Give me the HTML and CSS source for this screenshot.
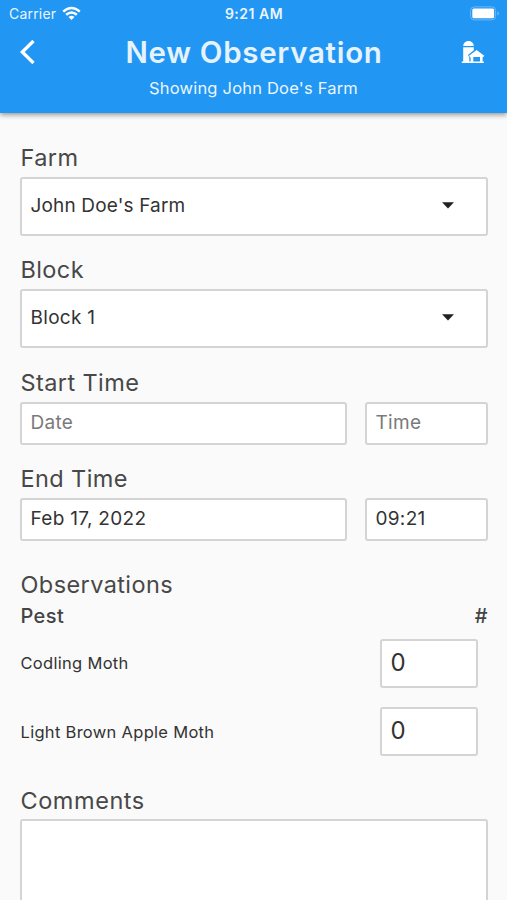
FILE: index.html
```html
<!DOCTYPE html>
<html lang="en">
<head>
<meta charset="utf-8">
<title>New Observation</title>
<link rel="stylesheet" href="styles.css">
</head>
<body>
<header class="header">
  <div class="status">
    <div class="carrier"><span>Carrier</span>
      <svg class="wifi" width="19" height="15" viewBox="0 0 19 15"><g fill="none" stroke="#fff" stroke-width="2.5"><path d="M1.2 5.6Q9.500-1.600 17.800 5.600"/><path d="M4.200 8.800Q9.500 4.200 14.800 8.800"/></g><path d="M6.500 11Q9.500 8.700 12.500 11L9.500 14.100Z" fill="#fff"/></svg>
    </div>
    <div class="clock">9:21 AM</div>
    <svg class="battery" width="31" height="15" viewBox="0 0 31 15"><rect x="1.600" y=".9" width="25" height="13" rx="3.500" fill="none" stroke="#6bb9f8" stroke-width="1"/><rect x="3.300" y="2.600" width="21.800" height="9.600" rx="1.500" fill="#fff"/><path d="M28.300 5.300Q30 6 30 7.400T28.300 9.500Z" fill="#6bb9f8"/></svg>
  </div>
  <div class="bar">
    <svg class="back" width="18" height="26" viewBox="0 0 18 26"><path d="M14.500 2L3.300 13L14.500 24" fill="none" stroke="#fff" stroke-width="3.300"/></svg>
    <h1 class="title">New Observation</h1>
    <svg class="barn" width="24" height="24" viewBox="0 0 24 24" fill="#fff"><path d="M2.200 5.900C2.700-.7 12.300-.7 12.800 5.900Z"/><path d="M2.200 7.200H12.800V10.200L7 15.100L8.300 17.300V21.300H8.800V23H.8V21.600H2.200Z"/><path fill-rule="evenodd" d="M15.600 10L23.300 15.700L22 17.300L21.600 17V21.500H22.800V23H8.600V21.500H9.600V17L9.200 17.300L8 15.700ZM12.300 17V21.500H19V17Z"/></svg>
  </div>
  <p class="subtitle">Showing John Doe's Farm</p>
</header>
<main class="form">
  <section class="field">
    <h2 class="label">Farm</h2>
    <div class="box select"><span class="value value-farm">John Doe's Farm</span><svg width="12" height="7" viewBox="0 0 12 7"><path d="M0 .3H12L6 6.500Z" fill="#222"/></svg></div>
  </section>
  <section class="field">
    <h2 class="label">Block</h2>
    <div class="box select"><span class="value">Block 1</span><svg width="12" height="7" viewBox="0 0 12 7"><path d="M0 .3H12L6 6.500Z" fill="#222"/></svg></div>
  </section>
  <section class="field">
    <h2 class="label">Start Time</h2>
    <div class="when"><div class="box hint">Date</div><div class="box hint">Time</div></div>
  </section>
  <section class="field field-end">
    <h2 class="label">End Time</h2>
    <div class="when"><div class="box">Feb 17, 2022</div><div class="box">09:21</div></div>
  </section>
  <section class="observations">
    <h2 class="label">Observations</h2>
    <div class="columns"><span>Pest</span><span>#</span></div>
    <div class="pest"><span>Codling Moth</span><div class="box count">0</div></div>
    <div class="pest"><span>Light Brown Apple Moth</span><div class="box count">0</div></div>
  </section>
  <section class="comments">
    <h2 class="label">Comments</h2>
    <div class="box note"></div>
  </section>
</main>
</body>
</html>
```
FILE: styles.css
```css
* { box-sizing: border-box; }
html { background: #fafafa; }
body {
  margin: 0;
  height: 900px;
  overflow: hidden;
  display: flex;
  flex-direction: column;
  background: #fafafa;
  color: #333;
  font-family: Inter, "Liberation Sans", sans-serif;
}
h1, h2, p { margin: 0; }
svg { display: block; flex: none; }
.header {
  flex: none;
  height: 113px;
  background: #2196f3;
  color: #eaf5fe;
  box-shadow: 0 2px 5px rgba(0, 0, 0, .4);
}
.status {
  height: 27px;
  padding: 0 7px 0 9px;
  display: grid;
  grid-template-columns: 1fr auto 1fr;
  align-items: center;
}
.carrier { display: flex; align-items: center; gap: 6px; font-size: 14px; letter-spacing: .2px; }
.wifi { margin-top: -1px; }
.clock { font-size: 14px; font-weight: 600; letter-spacing: .5px; margin-left: -1px; }
.battery { justify-self: end; margin-top: -1px; }
.bar {
  height: 49px;
  padding: 1px 22px 0 19px;
  display: grid;
  grid-template-columns: 24px 1fr 24px;
  align-items: center;
}
.title {
  padding-left: 4px;
  font-size: 29.5px;
  line-height: 48px;
  font-weight: 600;
  letter-spacing: .7px;
  text-align: center;
  white-space: nowrap;
  color: #e6f3fe;
}
.subtitle { font-size: 16.5px; line-height: 24px; text-align: center; letter-spacing: .2px; }
.form { padding: 31.5px 19px 0 20px; }
.field { margin-bottom: 21.5px; }
.field-end { margin-bottom: 31px; }
.label {
  height: 24px;
  margin: 0 0 7px;
  padding: 1px 0 0 .5px;
  font-size: 23.5px;
  line-height: 24px;
  font-weight: 400;
  letter-spacing: .4px;
  color: #484848;
}
.field .label { margin-bottom: 8px; }
.box {
  height: 43px;
  padding: 0 8.5px;
  border: 2px solid #d4d4d4;
  border-radius: 3px;
  background: #fff;
  font-size: 19px;
  line-height: 37px;
  letter-spacing: .3px;
}
.select {
  height: 59px;
  padding-right: 32px;
  padding-bottom: 2px;
  display: flex;
  align-items: center;
  justify-content: space-between;
}
.value-farm { letter-spacing: .15px; }
.when { display: grid; grid-template-columns: 327px 123px; justify-content: space-between; }
.hint { color: #7a7a7a; }
.observations .label { margin-bottom: 4px; }
.columns {
  display: flex;
  justify-content: space-between;
  height: 29px;
  padding-left: .5px;
  line-height: 33px;
  font-size: 20px;
  font-weight: 500;
  letter-spacing: .4px;
  color: #444;
}
.pest {
  height: 68.5px;
  padding: 0 10px 0 .5px;
  display: flex;
  align-items: center;
  justify-content: space-between;
  font-size: 16.5px;
  letter-spacing: .3px;
}
.count { width: 98px; height: 49px; line-height: 44px; font-size: 24px; }
.comments { margin-top: 21.5px; }
.comments .label { letter-spacing: .55px; }
.note { height: 110px; }
```
